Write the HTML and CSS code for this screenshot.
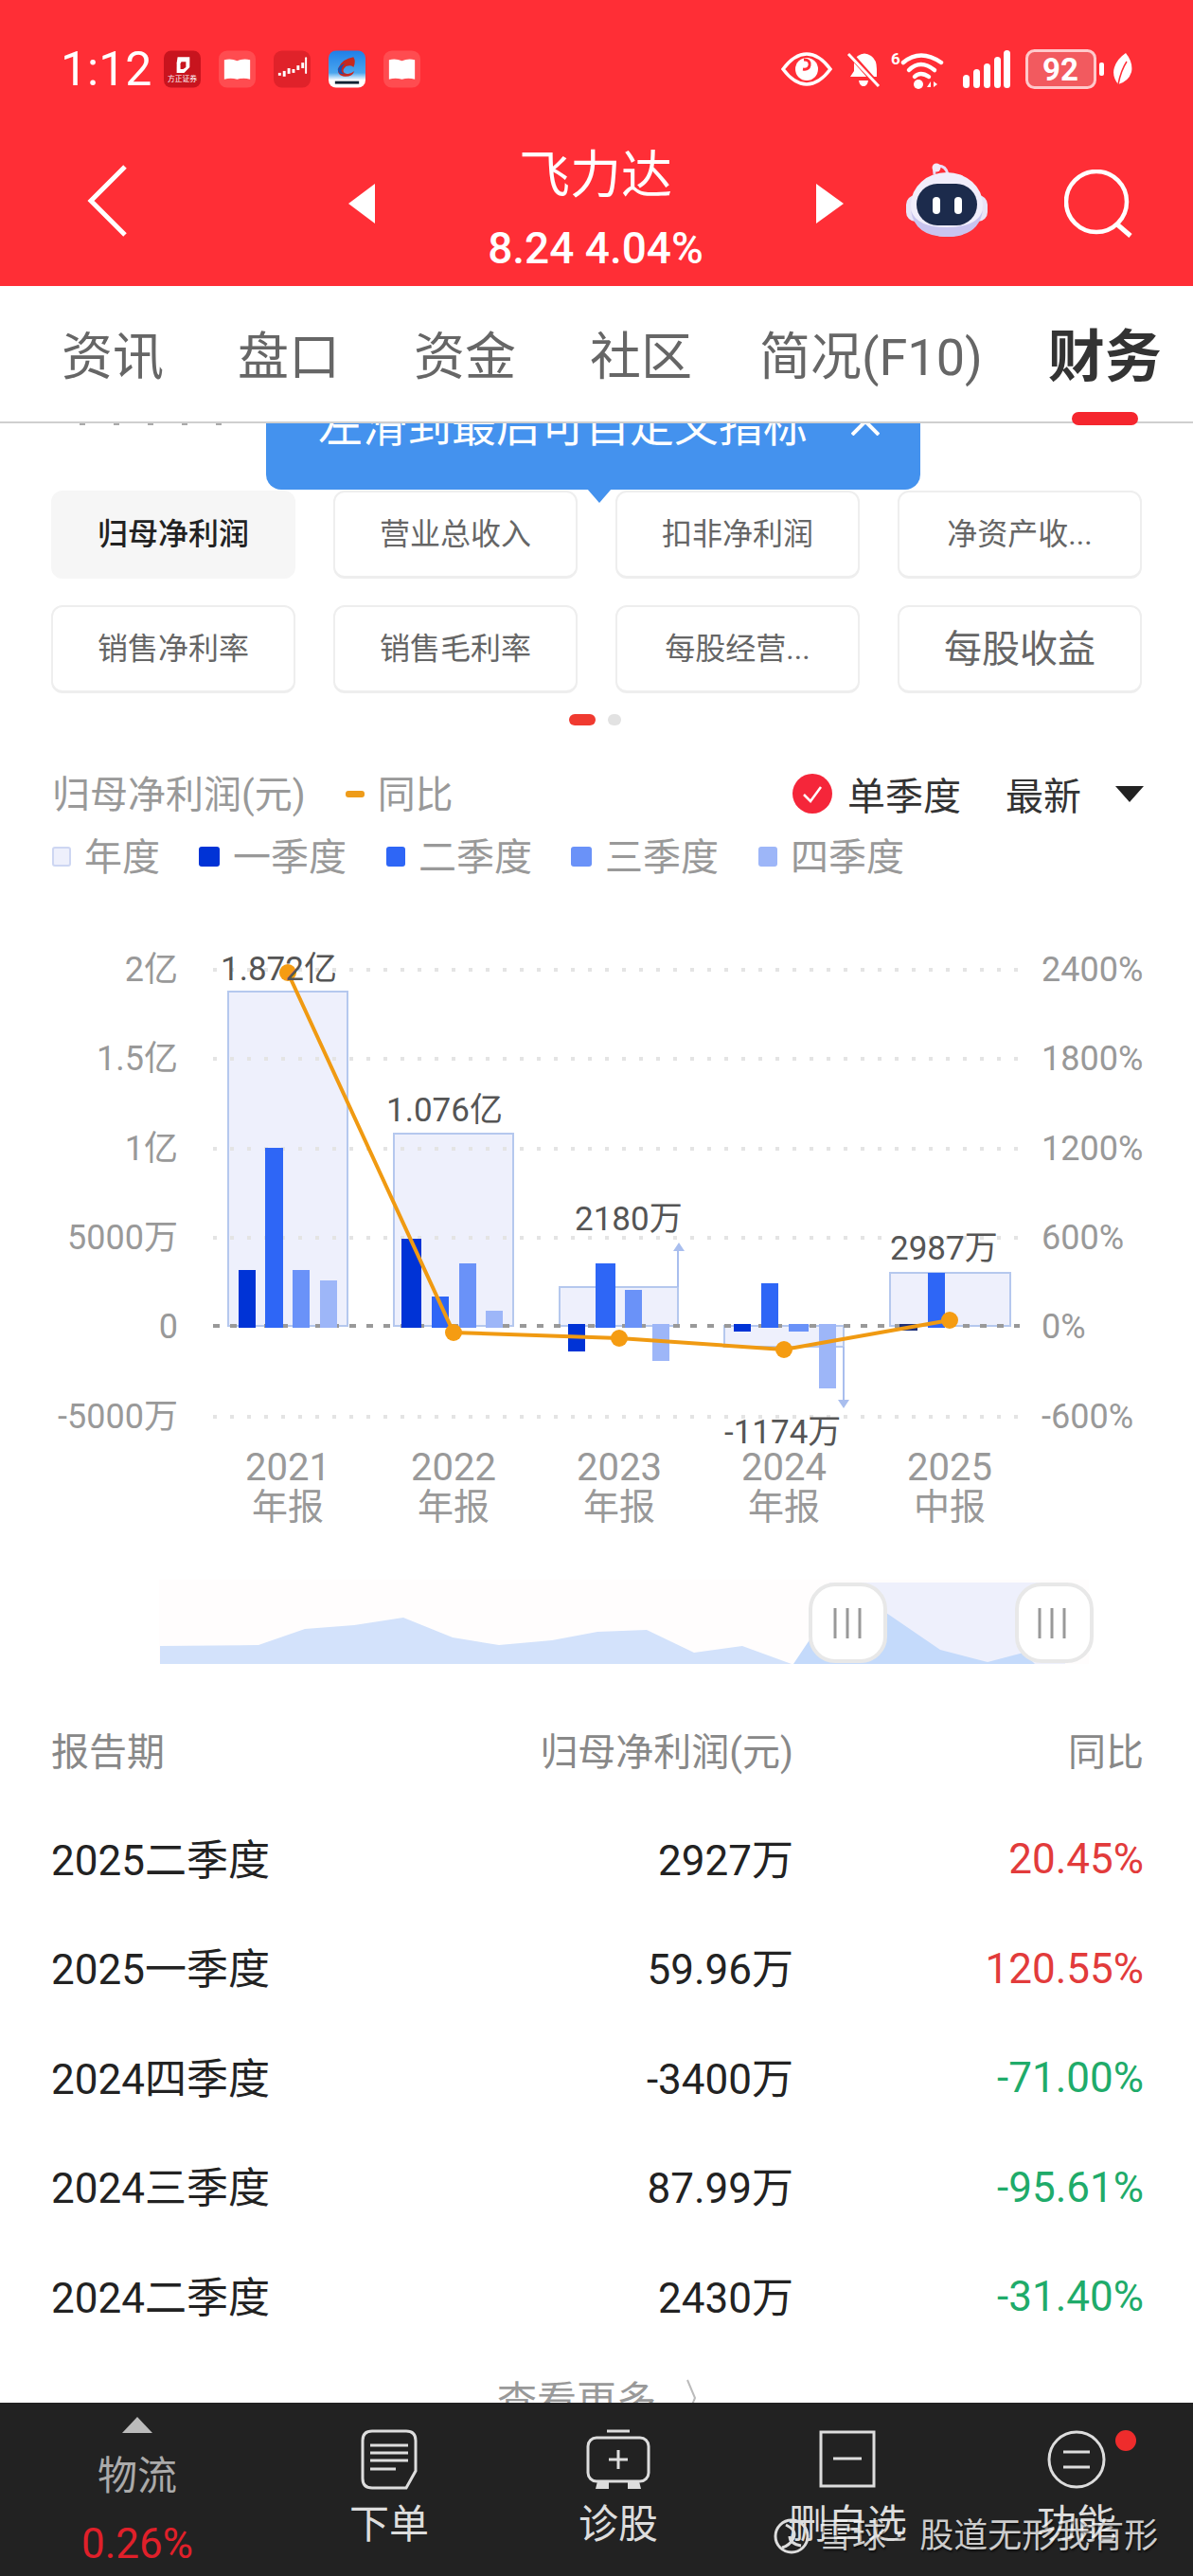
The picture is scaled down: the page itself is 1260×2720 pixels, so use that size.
FILE: index.html
```html
<!DOCTYPE html>
<html>
<head>
	<meta charset="utf-8">
	<meta name="viewport" content="width=device-width, initial-scale=1">
	<title>飞力达</title>
	<link rel="stylesheet" href="styles.css">
</head>
<body>
<div class="page">
	<div class="status-bar">
		<div class="status-left">
			<span class="time">1:12</span>
			<svg class="app-icon" viewBox="0 0 40 40"><rect width="40" height="40" rx="8" fill="#c8141e"/><path d="M15 7h13v11l-6 6h-8V13z" fill="#fff"/><path d="M19 12h5v6l-3 2h-3v-6z" fill="#c8141e"/><text x="20" y="33" class="app-text">方正证券</text></svg>
			<svg class="app-icon" viewBox="0 0 40 40"><rect width="40" height="40" rx="9" fill="#ff4c50"/><path d="M6 10q7-2 14 1q7-3 14-1v21q-7-2-14 0q-7-2-14 0z" fill="#fff"/></svg>
			<svg class="app-icon" viewBox="0 0 40 40"><rect width="40" height="40" rx="9" fill="#e0222a"/><g fill="#fff"><rect x="5" y="24" width="3" height="3"/><rect x="10" y="22" width="3" height="6"/><rect x="15" y="19" width="3" height="6"/><rect x="20" y="20" width="3" height="4"/><rect x="25" y="16" width="3" height="5"/><rect x="30" y="13" width="3" height="6"/><rect x="34" y="7" width="2" height="18" rx="1"/></g></svg>
			<svg class="app-icon" viewBox="0 0 40 40"><defs><linearGradient id="appblue" x1="0" y1="0" x2="0" y2="1"><stop offset="0" stop-color="#1f7fe8"/><stop offset=".6" stop-color="#4aa6ee"/><stop offset=".8" stop-color="#fff"/></linearGradient></defs><rect width="40" height="40" rx="8" fill="url(#appblue)"/><path d="M27 7q-12 2-16 11q-3 9 7 10q8 0 10-6q-6 5-11 2q-3-3 2-7q6-2 8 1q3-6 0-11z" fill="#c8281e"/><path d="M10 20q2-5 8-6q-4 3-4 7q0 4 5 4q-9 2-9-5z" fill="#1b4fb0"/><rect x="7" y="33" width="26" height="3" fill="#123"/></svg>
			<svg class="app-icon" viewBox="0 0 40 40"><rect width="40" height="40" rx="9" fill="#ff4c50"/><path d="M6 10q7-2 14 1q7-3 14-1v21q-7-2-14 0q-7-2-14 0z" fill="#fff"/></svg>
		</div>
		<div class="status-right">
			<svg class="st-eye" viewBox="0 0 54 36"><path d="M2 18Q14 2 27 2T52 18Q40 34 27 34T2 18Z" fill="none" stroke="#fff" stroke-width="3.5"/><circle cx="27" cy="18" r="12" fill="#fff"/><path d="M24 8q7 0 6 6q-1 5-7 4" fill="none" stroke="#ff2e36" stroke-width="3"/></svg>
			<svg class="st-bell" viewBox="0 0 36 40"><path d="M12 6q7-5 14 0q6 4 6 14v8H4l4-6V14q0-5 4-8zM13 32h10q-1 6-5 6t-5-6z" fill="#fff"/><path d="M2 2L34 38" stroke="#ff2e36" stroke-width="6"/><path d="M2 4L34 38" stroke="#fff" stroke-width="3"/></svg>
			<svg class="st-wifi" viewBox="0 0 56 42"><text x="0" y="16" class="wifi-six">6</text><g fill="none" stroke="#fff" stroke-width="4.5" stroke-linecap="round"><path d="M13 14Q31 -1 53 14"/><path d="M19 22Q31 10 46 22"/><path d="M25 29Q31 23 40 29"/></g><circle cx="29" cy="37" r="5" fill="#fff"/><path d="M38 40l4-6v6zM45 34l4 3-4 3z" fill="#fff"/></svg>
			<svg class="st-signal" viewBox="0 0 50 40"><g fill="#fff"><rect x="0" y="26" width="7" height="14" rx="3.5"/><rect x="11" y="20" width="7" height="20" rx="3.5"/><rect x="22" y="14" width="7" height="26" rx="3.5"/><rect x="33" y="7" width="7" height="33" rx="3.5"/><rect x="43" y="0" width="7" height="40" rx="3.5"/></g></svg>
			<svg class="st-battery" viewBox="0 0 84 42"><rect x="1.5" y="1.5" width="72" height="39" rx="8" fill="#f25a5f" stroke="#ffc9cb" stroke-width="3"/><text x="37" y="33" class="battery-text">92</text><rect x="78" y="14" width="5" height="14" rx="2" fill="#fff"/></svg>
			<svg class="st-leaf" viewBox="0 0 22 34"><path d="M14 0Q22 10 20 20Q17 30 6 33Q-1 24 2 15Q5 6 14 0Z" fill="#fff"/><path d="M6 33Q9 18 15 9" stroke="#ff2e36" stroke-width="1.5" fill="none"/></svg>
		</div>
	</div>

	<div class="top-bar">
		<svg class="back" viewBox="0 0 42 76"><path d="M40 2L4 38L40 74" fill="none" stroke="#fff" stroke-width="5"/></svg>
		<span class="tri tri-left"></span>
		<div class="stock">
			<div class="stock-name">飞力达</div>
			<div class="stock-price">8.24 4.04%</div>
		</div>
		<span class="tri tri-right"></span>
		<svg class="robot" viewBox="0 0 86 80"><path d="M30 12q-2-8 4-9q8 0 10 9" fill="none" stroke="#eadcf5" stroke-width="3"/><circle cx="32" cy="5" r="4.5" fill="#f3e9f8"/><rect x="0" y="34" width="86" height="28" rx="10" fill="#e9e4f7"/><ellipse cx="43" cy="44" rx="38" ry="34" fill="#f1eefb"/><path d="M5 50q4 28 38 28t38-28q-6 18-38 18T5 50z" fill="#c9c4ef"/><rect x="11" y="22" width="64" height="44" rx="22" fill="#1c2b4c"/><rect x="28" y="36" width="8" height="18" rx="4" fill="#fff"/><rect x="51" y="36" width="8" height="18" rx="4" fill="#fff"/></svg>
		<svg class="search" viewBox="0 0 72 72"><circle cx="34" cy="34" r="32" fill="none" stroke="#fff" stroke-width="4.5"/><path d="M56 58L70 70" stroke="#fff" stroke-width="5"/></svg>
	</div>

	<div class="tabs">
		<span class="tab">资讯</span>
		<span class="tab">盘口</span>
		<span class="tab">资金</span>
		<span class="tab">社区</span>
		<span class="tab tab-f10">简况(F10)</span>
		<span class="tab tab-active">财务</span>
	</div>

	<div class="main">
		<div class="peek">
			<span></span><span></span><span></span><span></span><span></span>
		</div>
		<div class="tooltip">
			<span>左滑到最后可自定义指标</span>
			<svg class="tooltip-close" viewBox="0 0 30 30"><path d="M1 1L29 29M29 1L1 29" stroke="#fff" stroke-width="4"/></svg>
		</div>

		<div class="chips">
			<div class="chip chip-active">归母净利润</div>
			<div class="chip">营业总收入</div>
			<div class="chip">扣非净利润</div>
			<div class="chip">净资产收...</div>
			<div class="chip">销售净利率</div>
			<div class="chip">销售毛利率</div>
			<div class="chip">每股经营...</div>
			<div class="chip chip-big">每股收益</div>
		</div>
		<div class="page-dots"><span class="dot-on"></span><span class="dot-off"></span></div>

		<div class="chart-head">
			<span class="chart-title">归母净利润(元)</span>
			<span class="line-key"></span>
			<span class="chart-title">同比</span>
			<div class="chart-opts">
				<svg class="check" viewBox="0 0 42 42"><circle cx="21" cy="21" r="21" fill="#f5263a"/><path d="M12 22l7 7 11-15" fill="none" stroke="#fff" stroke-width="2.5"/></svg>
				<span class="opt-single">单季度</span>
				<span class="opt-new">最新</span>
				<span class="opt-arrow"></span>
			</div>
		</div>
		<div class="legend">
			<span class="key key-year"></span><span class="legend-text">年度</span>
			<span class="key key-q1"></span><span class="legend-text">一季度</span>
			<span class="key key-q2"></span><span class="legend-text">二季度</span>
			<span class="key key-q3"></span><span class="legend-text">三季度</span>
			<span class="key key-q4"></span><span class="legend-text">四季度</span>
		</div>

		<svg class="chart" viewBox="0 960 1260 810">
			<!-- year bars -->
			<g class="bar-year">
				<rect x="241" y="1047" width="126" height="353"/>
				<rect x="416" y="1197" width="126" height="203"/>
				<rect x="591" y="1359" width="125" height="41"/>
				<rect x="765" y="1400" width="126" height="22"/>
				<rect x="940" y="1344" width="127" height="56"/>
			</g>
			<!-- grid -->
			<g class="grid">
				<path d="M225 1024H1077"/><path d="M225 1118H1077"/><path d="M225 1213H1077"/><path d="M225 1307H1077"/><path d="M225 1496H1077"/>
			</g>
			<path class="grid-zero" d="M225 1400H1077"/>
			<!-- quarter bars -->
			<g fill="#0033d6">
				<rect x="252" y="1341" width="18" height="61"/>
				<rect x="424" y="1308" width="21" height="94"/>
				<rect x="600" y="1398" width="18" height="29"/>
				<rect x="775" y="1398" width="18" height="8"/>
				<rect x="950" y="1398" width="19" height="7" fill="#1d2f78"/>
			</g>
			<g fill="#2e66f6">
				<rect x="280" y="1212" width="19" height="190"/>
				<rect x="456" y="1369" width="18" height="33"/>
				<rect x="629" y="1334" width="21" height="68"/>
				<rect x="804" y="1355" width="18" height="47"/>
				<rect x="980" y="1344" width="18" height="58"/>
			</g>
			<g fill="#6a92f8">
				<rect x="309" y="1341" width="18" height="61"/>
				<rect x="485" y="1334" width="18" height="68"/>
				<rect x="660" y="1362" width="18" height="40"/>
				<rect x="833" y="1398" width="21" height="8"/>
			</g>
			<g fill="#9db6f8">
				<rect x="338" y="1352" width="18" height="50"/>
				<rect x="513" y="1384" width="18" height="18"/>
				<rect x="689" y="1398" width="18" height="39"/>
				<rect x="865" y="1398" width="18" height="68"/>
			</g>
			<!-- up and down markers -->
			<path class="marker" d="M716 1359V1318M891 1422V1482"/>
			<path fill="#a9beee" d="M717 1312l6 9h-12zM891 1487l-6-9h12z"/>
			<!-- yoy line -->
			<polyline class="yoy" points="304,1027 479,1407 654,1413 828,1425 1003,1394"/>
			<g fill="#f59c12">
				<circle cx="304" cy="1027" r="9"/><circle cx="479" cy="1407" r="9"/><circle cx="654" cy="1413" r="9"/><circle cx="828" cy="1425" r="9"/><circle cx="1003" cy="1394" r="9"/>
			</g>
			<!-- axis text -->
			<g class="axis-left">
				<text x="188" y="1036">2亿</text><text x="188" y="1130">1.5亿</text><text x="188" y="1225">1亿</text><text x="188" y="1319">5000万</text><text x="188" y="1413">0</text><text x="188" y="1508">-5000万</text>
			</g>
			<g class="axis-right">
				<text x="1100" y="1036">2400%</text><text x="1100" y="1130">1800%</text><text x="1100" y="1225">1200%</text><text x="1100" y="1319">600%</text><text x="1100" y="1413">0%</text><text x="1100" y="1508">-600%</text>
			</g>
			<g class="val">
				<text x="233" y="1035">1.872亿</text><text x="408" y="1184">1.076亿</text><text x="607" y="1299">2180万</text><text x="940" y="1330">2987万</text><text x="765" y="1524">-1174万</text>
			</g>
			<g class="axis-x">
				<text x="304" y="1563" class="axis-year">2021</text><text x="304" y="1604">年报</text>
				<text x="479" y="1563" class="axis-year">2022</text><text x="479" y="1604">年报</text>
				<text x="654" y="1563" class="axis-year">2023</text><text x="654" y="1604">年报</text>
				<text x="828" y="1563" class="axis-year">2024</text><text x="828" y="1604">年报</text>
				<text x="1003" y="1563" class="axis-year">2025</text><text x="1003" y="1604">中报</text>
			</g>
			<!-- range slider -->
			<rect x="168" y="1668" width="982" height="89" fill="#fffdfd"/>
			<rect x="876" y="1671" width="249" height="86" fill="#eef0fc"/>
			<polygon fill="#d3e2fb" points="169,1738 273,1737 322,1720 374,1716 426,1708 478,1729 527,1737 583,1732 631,1723 683,1721 733,1745 784,1738 836,1757 169,1757"/>
			<polygon fill="#c4dafb" points="838,1757 856,1730 890,1680 936,1703 993,1742 1043,1755 1081,1745 1093,1757"/>
			<g class="handle">
				<rect x="856" y="1673" width="79" height="81" rx="26"/>
				<rect x="1074" y="1673" width="79" height="81" rx="26"/>
			</g>
			<path class="handle-lines" d="M882 1698V1730M895 1698V1730M908 1698V1730M1098 1698V1730M1111 1698V1730M1124 1698V1730"/>
		</svg>

		<div class="table">
			<div class="tr tr-head"><span>报告期</span><span class="num">归母净利润(元)</span><span class="num">同比</span></div>
			<div class="tr"><span>2025二季度</span><span class="num">2927万</span><span class="num up">20.45%</span></div>
			<div class="tr"><span>2025一季度</span><span class="num">59.96万</span><span class="num up">120.55%</span></div>
			<div class="tr"><span>2024四季度</span><span class="num">-3400万</span><span class="num down">-71.00%</span></div>
			<div class="tr"><span>2024三季度</span><span class="num">87.99万</span><span class="num down">-95.61%</span></div>
			<div class="tr"><span>2024二季度</span><span class="num">2430万</span><span class="num down">-31.40%</span></div>
		</div>
		<div class="more">查看更多<svg class="more-arrow" viewBox="0 0 10 40"><path d="M1 1L9 20L1 39" fill="none" stroke="#bbb" stroke-width="2"/></svg></div>
	</div>

	<div class="bottom-bar">
		<div class="nav nav-first">
			<span class="nav-tri"></span>
			<span class="nav-name">物流</span>
			<span class="nav-pct">0.26%</span>
		</div>
		<div class="nav">
			<svg class="nav-icon" viewBox="0 0 60 64"><path d="M12 2H48Q58 2 58 12V44L48 62H12Q2 62 2 52V12Q2 2 12 2Z" fill="none" stroke="#ddd" stroke-width="3"/><path d="M10 17H50M10 25H50M10 33H50M10 42H37" stroke="#ddd" stroke-width="3"/></svg>
			<span class="nav-label">下单</span>
		</div>
		<div class="nav">
			<svg class="nav-icon" viewBox="0 0 68 64"><path d="M22 2H46" stroke="#ddd" stroke-width="3"/><rect x="2" y="9" width="64" height="46" rx="9" fill="none" stroke="#ddd" stroke-width="3"/><path d="M34 22V42M24 32H44" stroke="#ddd" stroke-width="3"/><path d="M12 55L10 63H24V55M44 55V63H58L56 55" fill="#ddd"/></svg>
			<span class="nav-label">诊股</span>
		</div>
		<div class="nav">
			<svg class="nav-icon" viewBox="0 0 60 64"><rect x="2" y="3" width="56" height="57" fill="none" stroke="#ddd" stroke-width="3"/><path d="M15 31H45" stroke="#ddd" stroke-width="3"/></svg>
			<span class="nav-label">删自选</span>
		</div>
		<div class="nav nav-last">
			<svg class="nav-icon" viewBox="0 0 62 64"><circle cx="31" cy="32" r="29" fill="none" stroke="#ddd" stroke-width="3"/><path d="M17 24H45M17 40H45" stroke="#ddd" stroke-width="3"/></svg>
			<span class="nav-label">功能</span>
			<span class="red-dot"></span>
		</div>
		<div class="watermark">
			<svg class="wm-logo" viewBox="0 0 40 40"><circle cx="20" cy="20" r="17" fill="none" stroke="#ddd" stroke-width="3"/><path d="M14 8q12 6 8 14t-12 10M30 30q-12-2-12-10" fill="none" stroke="#ddd" stroke-width="3"/></svg>
			<span class="wm-name">雪球 ·</span>
			<span class="wm-user">股道无形我有形</span>
		</div>
	</div>
</div>
</body>
</html>
```

FILE: styles.css
```css
*{
	margin: 0;
	padding: 0;
	box-sizing: border-box;
}
body{
	width: 1260px;
	height: 2720px;
	overflow: hidden;
	background: white;
	font-family: Roboto, "Noto Sans CJK SC", sans-serif;
}
.page{
	width: 1260px;
	height: 2720px;
	display: flex;
	flex-direction: column;
	overflow: hidden;
}

/* status bar */
.status-bar{
	height: 146px;
	flex: none;
	background: #ff2e36;
	display: flex;
	align-items: center;
	justify-content: space-between;
	padding: 0 63px 0 64px;
}
.status-left{
	display: flex;
	align-items: center;
	gap: 19px;
}
.time{
	font-size: 50px;
	color: white;
	width: 93px;
	margin-right: -3px;
	line-height: 56px;
}
.app-icon{
	width: 39px;
	height: 40px;
	display: block;
}
.app-text{
	font-size: 8px;
	fill: white;
	text-anchor: middle;
}
.status-right{
	display: flex;
	align-items: center;
}
.st-eye{ width: 54px; height: 36px; }
.st-bell{ width: 36px; height: 40px; margin-left: 15px; }
.st-wifi{ width: 56px; height: 42px; margin-left: 11px; }
.st-signal{ width: 50px; height: 40px; margin-left: 20px; }
.st-battery{ width: 84px; height: 42px; margin-left: 16px; }
.st-leaf{ width: 22px; height: 34px; margin-left: 8px; }
.wifi-six{
	font-size: 17px;
	font-weight: 700;
	fill: white;
}
.battery-text{
	font-size: 33px;
	font-weight: 700;
	fill: white;
	text-anchor: middle;
}

/* stock bar */
.top-bar{
	height: 156px;
	flex: none;
	background: #ff2e36;
	display: flex;
	align-items: center;
	padding: 0 64px 18px 0;
}
.back{
	width: 42px;
	height: 76px;
	margin-left: 92px;
	margin-top: -6px;
}
.tri{
	width: 0;
	height: 0;
	border-top: 21px solid transparent;
	border-bottom: 21px solid transparent;
}
.tri-left{
	margin-left: 234px;
	border-right: 28px solid white;
}
.tri-right{
	border-left: 29px solid white;
}
.stock{
	flex: 1;
	align-self: flex-start;
	text-align: center;
	color: white;
}
.stock-name{
	font-size: 54px;
	line-height: 80px;
}
.stock-price{
	font-size: 46px;
	font-weight: 500;
	line-height: 72px;
}
.robot{
	width: 86px;
	height: 80px;
	margin-left: 66px;
	margin-top: -6px;
}
.search{
	width: 72px;
	height: 72px;
	margin-left: 81px;
}

/* tabs */
.tabs{
	height: 145px;
	flex: none;
	display: flex;
	align-items: center;
	gap: 78px;
	padding: 8px 0 0 65px;
	border-bottom: 2px solid #cfcfcf;
	background: white;
}
.tab{
	font-size: 54px;
	line-height: 60px;
	color: #666;
	white-space: nowrap;
}
.tab-f10{
	margin-left: -7px;
}
.tab-active{
	position: relative;
	margin-left: -9px;
	font-size: 60px;
	font-weight: 700;
	color: #333;
}
.tab-active::after{
	content: "";
	position: absolute;
	left: 25px;
	bottom: -41px;
	width: 70px;
	height: 14px;
	border-radius: 7px;
	background: #f5262e;
}

/* content */
.main{
	flex: 1;
	min-height: 0;
	overflow: hidden;
	position: relative;
}
.peek{
	height: 3px;
	display: flex;
	gap: 30px;
	padding-left: 84px;
}
.peek span{
	width: 6px;
	height: 2px;
	background: #aaa;
}
.tooltip{
	position: absolute;
	z-index: 2;
	left: 281px;
	top: -74px;
	width: 691px;
	height: 144px;
	padding-left: 55px;
	display: flex;
	align-items: center;
	gap: 46px;
	background: #4492ee;
	border-radius: 16px;
	color: white;
	font-size: 47px;
	white-space: nowrap;
}
.tooltip::after{
	content: "";
	position: absolute;
	left: 339px;
	bottom: -14px;
	border-left: 13px solid transparent;
	border-right: 13px solid transparent;
	border-top: 15px solid #4492ee;
}
.tooltip-close{
	width: 30px;
	height: 30px;
}
.chips{
	display: grid;
	grid-template-columns: repeat(4, 258px);
	gap: 28px 40px;
	padding: 68px 0 0 54px;
}
.chip{
	height: 93px;
	display: flex;
	align-items: center;
	justify-content: center;
	padding-bottom: 7px;
	font-size: 32px;
	color: #666;
	background: white;
	border: 2px solid #eee;
	border-bottom-width: 3px;
	border-radius: 12px;
}
.chip-active{
	background: #f6f6f6;
	border-color: #f6f6f6;
	color: #222;
	font-weight: 500;
}
.chip-big{
	font-size: 40px;
}
.page-dots{
	height: 12px;
	margin-top: 22px;
	display: flex;
	justify-content: center;
	gap: 13px;
	padding-right: 3px;
}
.dot-on{
	width: 28px;
	height: 12px;
	border-radius: 6px;
	background: #f03a30;
}
.dot-off{
	width: 14px;
	height: 12px;
	border-radius: 6px;
	background: #e2e2e2;
}
.chart-head{
	height: 50px;
	margin-top: 47px;
	display: flex;
	align-items: center;
	padding: 0 52px 0 55px;
}
.chart-title{
	font-size: 40px;
	color: #999;
	margin-top: -4px;
}
.line-key{
	width: 20px;
	height: 7px;
	border-radius: 3px;
	background: #ee9c1a;
	margin: 0 14px 0 42px;
}
.chart-opts{
	margin-left: auto;
	display: flex;
	align-items: center;
	color: #333;
	font-size: 40px;
}
.check{
	width: 42px;
	height: 42px;
}
.opt-single{
	margin-left: 16px;
}
.opt-new{
	margin-left: 47px;
}
.opt-arrow{
	margin-left: 36px;
	width: 0;
	height: 0;
	border-left: 15px solid transparent;
	border-right: 15px solid transparent;
	border-top: 17px solid #222;
}
.legend{
	height: 44px;
	margin-top: 19px;
	display: flex;
	align-items: center;
	padding-left: 55px;
}
.key{
	width: 20px;
	height: 21px;
	border-radius: 3px;
}
.key-year{ background: #eef0fc; border: 2px solid #cdd6f2; }
.key-q1{ background: #0033d6; width: 22px; margin-left: 41px; }
.key-q2{ background: #2e66f6; margin-left: 42px; }
.key-q3{ background: #6a92f8; width: 22px; margin-left: 41px; }
.key-q4{ background: #9db6f8; margin-left: 42px; }
.legend-text{
	font-size: 40px;
	color: #999;
	margin: -4px 0 0 14px;
}

/* chart canvas */
.chart{
	display: block;
	width: 1260px;
	height: 810px;
	margin-top: 34px;
}
.bar-year rect{
	fill: #eef0fc;
	stroke: #b5c8ee;
	stroke-width: 2;
}
.grid path{
	stroke: #e4e4e4;
	stroke-width: 4;
	stroke-dasharray: 4 14;
	fill: none;
}
.grid-zero{
	stroke: #999;
	stroke-width: 4;
	stroke-dasharray: 7 11;
	fill: none;
}
.marker{
	stroke: #a9beee;
	stroke-width: 2;
	fill: none;
}
.yoy{
	fill: none;
	stroke: #f09a12;
	stroke-width: 4;
}
.axis-left text{
	font-size: 36px;
	fill: #999;
	text-anchor: end;
}
.axis-right text{
	font-size: 36px;
	fill: #999;
}
.val text{
	font-size: 35px;
	fill: #555;
}
.axis-x text{
	font-size: 38px;
	fill: #999;
	text-anchor: middle;
}
.axis-x .axis-year{
	font-size: 40px;
}
.handle rect{
	fill: white;
	stroke: #e8e8e8;
	stroke-width: 4;
}
.handle-lines{
	stroke: #999;
	stroke-width: 3;
	fill: none;
}

/* table */
.table{
	margin-top: 21px;
	padding: 0 52px 0 54px;
}
.tr{
	display: grid;
	grid-template-columns: 1fr 400px 370px;
	align-items: center;
	height: 115.5px;
	font-size: 44px;
	color: #222;
}
.tr-head{
	height: 112px;
	font-size: 40px;
	color: #888;
}
.num{
	text-align: right;
}
.up{
	color: #e23b3b;
	margin-top: 5px;
}
.down{
	color: #1fab6a;
	margin-top: 5px;
}
.more{
	height: 60px;
	margin-top: 21px;
	display: flex;
	align-items: center;
	justify-content: center;
	font-size: 42px;
	color: #999;
}
.more-arrow{
	width: 10px;
	height: 40px;
	margin-left: 32px;
}

/* bottom bar */
.bottom-bar{
	height: 183px;
	flex: none;
	position: relative;
	z-index: 3;
	background: #222;
	display: grid;
	grid-template-columns: 290px repeat(4, 242px);
}
.nav{
	position: relative;
	display: flex;
	flex-direction: column;
	align-items: center;
	padding-top: 28px;
}
.nav-first{
	padding-top: 15px;
}
.nav-icon{
	height: 64px;
	width: 68px;
	display: block;
}
.nav-label{
	margin-top: 13px;
	font-size: 42px;
	line-height: 48px;
	color: #ddd;
}
.nav-tri{
	width: 0;
	height: 0;
	border-left: 16px solid transparent;
	border-right: 16px solid transparent;
	border-bottom: 17px solid #bbb;
}
.nav-name{
	margin-top: 22px;
	font-size: 42px;
	line-height: 48px;
	color: #aaa;
}
.nav-pct{
	margin-top: 22px;
	font-size: 44px;
	line-height: 50px;
	color: #e0202a;
}
.red-dot{
	position: absolute;
	left: 162px;
	top: 29px;
	width: 22px;
	height: 22px;
	border-radius: 50%;
	background: #ee2c2c;
}
.watermark{
	position: absolute;
	left: 816px;
	top: 120px;
	display: flex;
	align-items: center;
	color: rgba(255,255,255,.78);
	font-size: 36px;
	line-height: 42px;
	text-shadow: 1px 2px 2px rgba(0,0,0,.6);
}
.wm-logo{
	width: 40px;
	height: 40px;
}
.wm-name{
	margin-left: 8px;
}
.wm-user{
	margin-left: 17px;
}
```
